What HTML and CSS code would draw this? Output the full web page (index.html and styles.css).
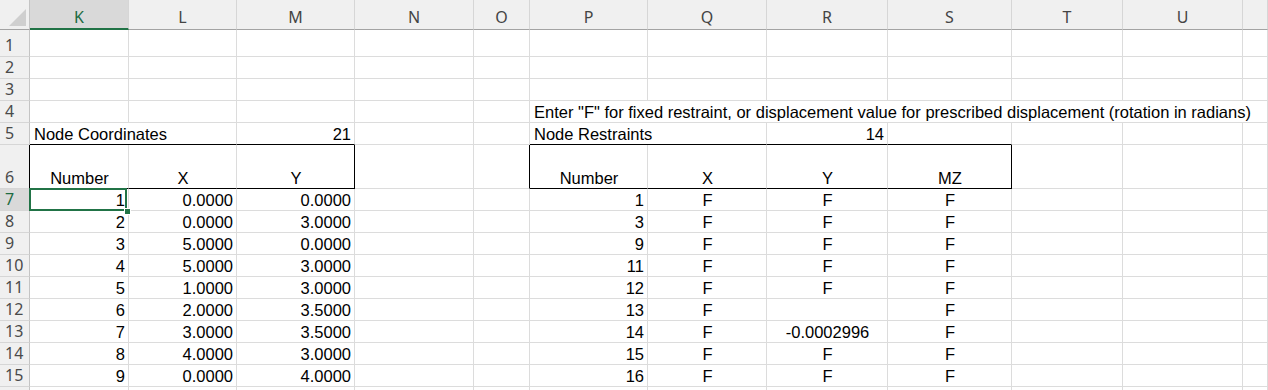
FILE: index.html
```html
<!DOCTYPE html>
<html>
<head>
<meta charset="utf-8">
<link rel="stylesheet" href="styles.css">
</head>
<body>
<div class="sheet">
  <!-- header -->
  <div class="hd corner"><svg width="29" height="29" viewBox="0 0 29 29"><polygon points="26,9 26,26 9,26" fill="#cfcfcf"/></svg></div>
  <div class="hd sel">K</div><div class="hd">L</div><div class="hd">M</div><div class="hd">N</div><div class="hd">O</div><div class="hd">P</div><div class="hd">Q</div><div class="hd">R</div><div class="hd">S</div><div class="hd">T</div><div class="hd">U</div><div class="hd"></div>

  <!-- row 1 -->
  <div class="rh">1</div><div class="c"></div><div class="c"></div><div class="c"></div><div class="c"></div><div class="c"></div><div class="c"></div><div class="c"></div><div class="c"></div><div class="c"></div><div class="c"></div><div class="c"></div><div class="c"></div>
  <!-- row 2 -->
  <div class="rh">2</div><div class="c"></div><div class="c"></div><div class="c"></div><div class="c"></div><div class="c"></div><div class="c"></div><div class="c"></div><div class="c"></div><div class="c"></div><div class="c"></div><div class="c"></div><div class="c"></div>
  <!-- row 3 -->
  <div class="rh">3</div><div class="c"></div><div class="c"></div><div class="c"></div><div class="c"></div><div class="c"></div><div class="c"></div><div class="c"></div><div class="c"></div><div class="c"></div><div class="c"></div><div class="c"></div><div class="c"></div>
  <!-- row 4 -->
  <div class="rh">4</div><div class="c"></div><div class="c"></div><div class="c"></div><div class="c"></div><div class="c"></div>
  <div class="c span7">Enter "F" for fixed restraint, or displacement value for prescribed displacement (rotation in radians)</div>
  <!-- row 5 -->
  <div class="rh">5</div>
  <div class="c span2 bb">Node Coordinates</div><div class="c r bb">21</div><div class="c"></div><div class="c"></div>
  <div class="c span2 bb">Node Restraints</div><div class="c r bb">14</div><div class="c bb"></div><div class="c"></div><div class="c"></div><div class="c"></div>
  <!-- row 6 -->
  <div class="rh brk">6</div>
  <div class="c m bb">Number</div><div class="c m bb">X</div><div class="c m bb brk">Y</div><div class="c"></div><div class="c brk"></div>
  <div class="c m bb">Number</div><div class="c m bb">X</div><div class="c m bb">Y</div><div class="c m bb brk">MZ</div><div class="c"></div><div class="c"></div><div class="c"></div>
  <!-- row 7 -->
  <div class="rh sel">7</div>
  <div class="c r active">1</div><div class="c r">0.0000</div><div class="c r">0.0000</div><div class="c"></div><div class="c"></div>
  <div class="c r">1</div><div class="c m">F</div><div class="c m">F</div><div class="c m">F</div><div class="c"></div><div class="c"></div><div class="c"></div>
  <!-- row 8 -->
  <div class="rh">8</div>
  <div class="c r">2</div><div class="c r">0.0000</div><div class="c r">3.0000</div><div class="c"></div><div class="c"></div>
  <div class="c r">3</div><div class="c m">F</div><div class="c m">F</div><div class="c m">F</div><div class="c"></div><div class="c"></div><div class="c"></div>
  <!-- row 9 -->
  <div class="rh">9</div>
  <div class="c r">3</div><div class="c r">5.0000</div><div class="c r">0.0000</div><div class="c"></div><div class="c"></div>
  <div class="c r">9</div><div class="c m">F</div><div class="c m">F</div><div class="c m">F</div><div class="c"></div><div class="c"></div><div class="c"></div>
  <!-- row 10 -->
  <div class="rh">10</div>
  <div class="c r">4</div><div class="c r">5.0000</div><div class="c r">3.0000</div><div class="c"></div><div class="c"></div>
  <div class="c r">11</div><div class="c m">F</div><div class="c m">F</div><div class="c m">F</div><div class="c"></div><div class="c"></div><div class="c"></div>
  <!-- row 11 -->
  <div class="rh">11</div>
  <div class="c r">5</div><div class="c r">1.0000</div><div class="c r">3.0000</div><div class="c"></div><div class="c"></div>
  <div class="c r">12</div><div class="c m">F</div><div class="c m">F</div><div class="c m">F</div><div class="c"></div><div class="c"></div><div class="c"></div>
  <!-- row 12 -->
  <div class="rh">12</div>
  <div class="c r">6</div><div class="c r">2.0000</div><div class="c r">3.5000</div><div class="c"></div><div class="c"></div>
  <div class="c r">13</div><div class="c m">F</div><div class="c m"></div><div class="c m">F</div><div class="c"></div><div class="c"></div><div class="c"></div>
  <!-- row 13 -->
  <div class="rh">13</div>
  <div class="c r">7</div><div class="c r">3.0000</div><div class="c r">3.5000</div><div class="c"></div><div class="c"></div>
  <div class="c r">14</div><div class="c m">F</div><div class="c m">-0.0002996</div><div class="c m">F</div><div class="c"></div><div class="c"></div><div class="c"></div>
  <!-- row 14 -->
  <div class="rh">14</div>
  <div class="c r">8</div><div class="c r">4.0000</div><div class="c r">3.0000</div><div class="c"></div><div class="c"></div>
  <div class="c r">15</div><div class="c m">F</div><div class="c m">F</div><div class="c m">F</div><div class="c"></div><div class="c"></div><div class="c"></div>
  <!-- row 15 -->
  <div class="rh">15</div>
  <div class="c r">9</div><div class="c r">0.0000</div><div class="c r">4.0000</div><div class="c"></div><div class="c"></div>
  <div class="c r">16</div><div class="c m">F</div><div class="c m">F</div><div class="c m">F</div><div class="c"></div><div class="c"></div><div class="c"></div>
  <!-- row 16 (only its top edge is in view) -->
  <div class="rh"></div><div class="c"></div><div class="c"></div><div class="c"></div><div class="c"></div><div class="c"></div><div class="c"></div><div class="c"></div><div class="c"></div><div class="c"></div><div class="c"></div><div class="c"></div><div class="c"></div>
</div>
</body>
</html>
```

FILE: styles.css
```css
html, body {
  margin: 0;
  padding: 0;
  background: #ffffff;
  overflow: hidden;
}

.sheet {
  display: grid;
  grid-template-columns: 30px 99px 108px 118px 119px 56px 118px 119px 121px 124px 111px 120px 1fr;
  grid-template-rows: 30px 27px 22px 22px 22px 22px 44px repeat(10, 22px);
  width: 1268px;
  height: 390px;
  font-family: "Liberation Sans", Arial, sans-serif;
  font-size: 16.5px;
  color: #000;
}

.sheet > div {
  box-sizing: border-box;
  min-width: 0;
}

.hd {
  background: #f0f0f0;
  border-right: 1px solid #d6d6d6;
  border-bottom: 1px solid #a3a3a3;
  display: flex;
  align-items: center;
  justify-content: center;
  padding-top: 5px;
  font-family: "Noto Sans", "Liberation Sans", sans-serif;
  font-size: 16px;
  color: #444;
}

.hd.corner {
  padding: 0;
  align-items: stretch;
  justify-content: stretch;
  border-right-color: #c4c4c4;
}

.hd.sel {
  background: #d9d9d9;
  color: #1d6b41;
  border-bottom: 2px solid #217346;
}

.rh {
  background: #f0f0f0;
  border-right: 1px solid #c4c4c4;
  border-bottom: 1px solid #d6d6d6;
  display: flex;
  align-items: flex-end;
  padding: 0 0 1px 5px;
  line-height: 20px;
  font-family: "Noto Sans", "Liberation Sans", sans-serif;
  font-size: 16px;
  color: #4a4a4a;
}

.rh.sel {
  background: #d9d9d9;
  color: #1d6b41;
}

.c {
  border-right: 1px solid #dcdcdc;
  border-bottom: 1px solid #dcdcdc;
  display: flex;
  align-items: flex-end;
  padding: 0 3px 0 4px;
  line-height: 20px;
  white-space: nowrap;
  overflow: visible;
}

.c.r { justify-content: flex-end; }
.c.m { justify-content: center; }

.span2 { grid-column: span 2; }
.span7 { grid-column: span 7; }

.bb { border-bottom: 1px solid #000 !important; }
.brk { border-right: 1px solid #000 !important; }

.active {
  position: relative;
}

.active::after {
  content: "";
  position: absolute;
  left: -1px;
  top: -1px;
  right: 1px;
  bottom: -1px;
  border: 2px solid #217346;
  pointer-events: none;
}

.active::before {
  content: "";
  position: absolute;
  left: 94px;
  top: 19px;
  width: 7px;
  height: 7px;
  box-sizing: border-box;
  background: #217346;
  border: 1px solid #fff;
  z-index: 2;
}
```
